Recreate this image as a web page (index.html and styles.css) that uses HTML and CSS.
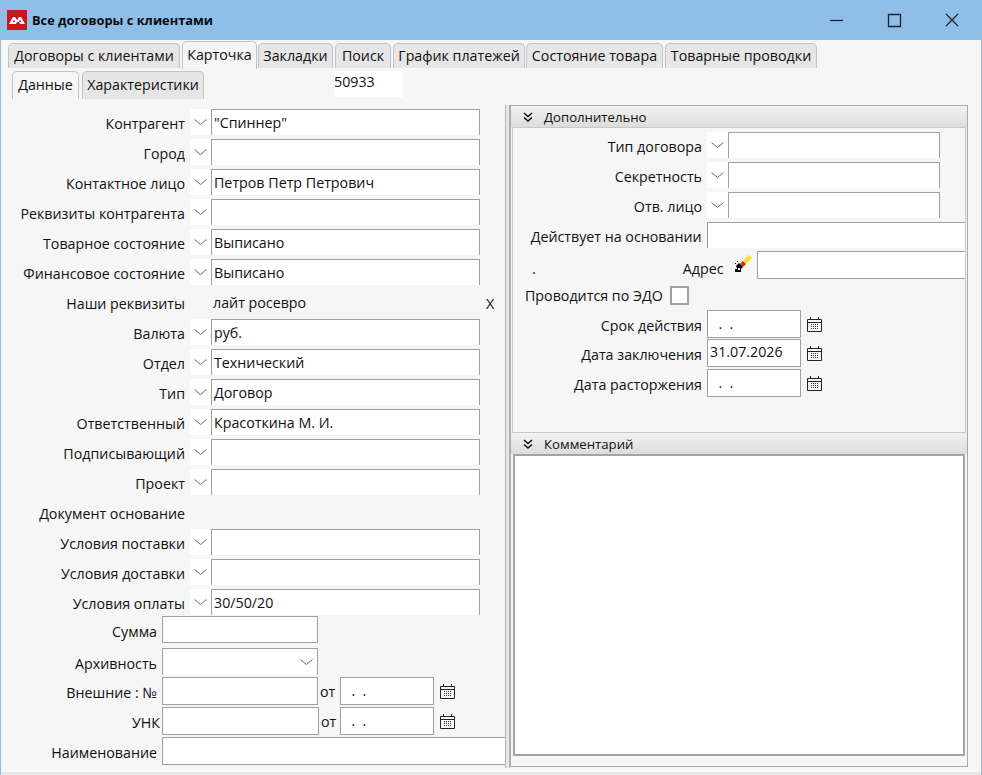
FILE: index.html
```html
<!DOCTYPE html>
<html lang="ru">
<head>
  <meta charset="UTF-8">
  <title>Все договоры с клиентами</title>
  <link rel="stylesheet" href="styles.css">
</head>
<body>
  <svg class="defs" width="0" height="0">
    <symbol id="arrow" viewBox="0 0 13 6"><path d="M.5.5 6.500 5.500 12.500.5" fill="none" stroke="#666" stroke-width="1"/></symbol>
    <symbol id="cal" viewBox="0 0 15 15">
      <path d="M.5 2.500h14v12H.5z" fill="#f8f8f8" stroke="#222"/>
      <path d="M1 5h13v1H1zM3 0h1v3H3zM11 0h1v3h-1z" fill="#222"/>
      <path d="M4 7h1v1H4zM6 7h1v1H6zM8 7h1v1H8zM10 7h1v1h-1zM4 9h1v1H4zM6 9h1v1H6zM8 9h1v1H8zM10 9h1v1h-1zM4 11h1v1H4zM6 11h1v1H6zM8 11h1v1H8zM10 11h1v1h-1z" fill="#333"/>
    </symbol>
    <symbol id="chev" viewBox="0 0 10 10"><path d="M1 1 5 4.500 9 1M1 5.500 5 9 9 5.500" fill="none" stroke="#111" stroke-width="1.500"/></symbol>
  </svg>

  <div class="titlebar">
    <svg class="logo" width="20" height="20" viewBox="0 0 20 20">
      <rect width="20" height="20" fill="#c8161d"/>
      <path fill-rule="evenodd" d="M2 14 6 7h2l2 3 2-3h2l4 7h-5l-1-2-2 0-1 2zM6 12h2L7 9.500zM12 12h2l-1-2.500z" fill="#fff"/>
    </svg>
    <span class="title">Все договоры с клиентами</span>
    <div class="winbtns">
      <svg width="58" height="40" viewBox="0 0 58 40"><path d="M23 20.500h13" stroke="#222" stroke-width="1.300"/></svg>
      <svg width="58" height="40" viewBox="0 0 58 40"><path d="M23.500 14.500h12v12h-12z" fill="none" stroke="#222" stroke-width="1.300"/></svg>
      <svg width="58" height="40" viewBox="0 0 58 40"><path d="M23 14l12 12M35 14 23 26" stroke="#222" stroke-width="1.300"/></svg>
    </div>
  </div>

  <div class="tabs">
    <div class="tab t1">Договоры с клиентами</div>
    <div class="tab active t2">Карточка</div>
    <div class="tab t3">Закладки</div>
    <div class="tab t4">Поиск</div>
    <div class="tab t5">График платежей</div>
    <div class="tab t6">Состояние товара</div>
    <div class="tab t7">Товарные проводки</div>
  </div>

  <div class="subtabs">
    <div class="tab active s1">Данные</div>
    <div class="tab s2">Характеристики</div>
    <div class="docnum">50933</div>
  </div>

  <div class="main">
    <div class="left">
      <div class="row"><label>Контрагент</label><span class="drop"><svg width="13" height="6"><use href="#arrow"/></svg></span><div class="val">"Спиннер"</div></div>
      <div class="row"><label>Город</label><span class="drop"><svg width="13" height="6"><use href="#arrow"/></svg></span><div class="val"></div></div>
      <div class="row"><label>Контактное лицо</label><span class="drop"><svg width="13" height="6"><use href="#arrow"/></svg></span><div class="val">Петров Петр Петрович</div></div>
      <div class="row"><label>Реквизиты контрагента</label><span class="drop"><svg width="13" height="6"><use href="#arrow"/></svg></span><div class="val"></div></div>
      <div class="row"><label>Товарное состояние</label><span class="drop"><svg width="13" height="6"><use href="#arrow"/></svg></span><div class="val">Выписано</div></div>
      <div class="row"><label>Финансовое состояние</label><span class="drop"><svg width="13" height="6"><use href="#arrow"/></svg></span><div class="val">Выписано</div></div>
      <div class="row"><label>Наши реквизиты</label><span class="plain">лайт росевро</span><span class="clear">X</span></div>
      <div class="row"><label>Валюта</label><span class="drop"><svg width="13" height="6"><use href="#arrow"/></svg></span><div class="val">руб.</div></div>
      <div class="row"><label>Отдел</label><span class="drop"><svg width="13" height="6"><use href="#arrow"/></svg></span><div class="val">Технический</div></div>
      <div class="row"><label>Тип</label><span class="drop"><svg width="13" height="6"><use href="#arrow"/></svg></span><div class="val">Договор</div></div>
      <div class="row"><label>Ответственный</label><span class="drop"><svg width="13" height="6"><use href="#arrow"/></svg></span><div class="val">Красоткина М. И.</div></div>
      <div class="row"><label>Подписывающий</label><span class="drop"><svg width="13" height="6"><use href="#arrow"/></svg></span><div class="val"></div></div>
      <div class="row"><label>Проект</label><span class="drop"><svg width="13" height="6"><use href="#arrow"/></svg></span><div class="val"></div></div>
      <div class="row"><label>Документ основание</label></div>
      <div class="row"><label>Условия поставки</label><span class="drop"><svg width="13" height="6"><use href="#arrow"/></svg></span><div class="val"></div></div>
      <div class="row"><label>Условия доставки</label><span class="drop"><svg width="13" height="6"><use href="#arrow"/></svg></span><div class="val"></div></div>
      <div class="row"><label>Условия оплаты</label><span class="drop"><svg width="13" height="6"><use href="#arrow"/></svg></span><div class="val">30/50/20</div></div>

      <div class="row2 r-sum"><label>Сумма</label><div class="box wide"></div></div>
      <div class="row2 r-arch"><label>Архивность</label><div class="box wide open"><svg width="13" height="6"><use href="#arrow"/></svg></div></div>
      <div class="row2 r-ext"><label>Внешние : №</label><div class="box wide"></div><span class="from">от</span><div class="box date">&nbsp;&nbsp;.&nbsp;&nbsp;.</div><svg class="calicon" width="15" height="15"><use href="#cal"/></svg></div>
      <div class="row2 r-unk"><label class="tight">УНК</label><div class="box wider"></div><span class="from">от</span><div class="box date">&nbsp;&nbsp;.&nbsp;&nbsp;.</div><svg class="calicon" width="15" height="15"><use href="#cal"/></svg></div>
      <div class="row2 r-name"><label>Наименование</label><div class="box full"></div></div>
    </div>

    <div class="splitter"></div>

    <div class="right">
      <div class="head"><svg width="10" height="10"><use href="#chev"/></svg><span>Дополнительно</span></div>
      <div class="extra">
        <div class="rrow"><label>Тип договора</label><span class="drop"><svg width="13" height="6"><use href="#arrow"/></svg></span><div class="val short"></div></div>
        <div class="rrow"><label>Секретность</label><span class="drop"><svg width="13" height="6"><use href="#arrow"/></svg></span><div class="val short"></div></div>
        <div class="rrow"><label>Отв. лицо</label><span class="drop"><svg width="13" height="6"><use href="#arrow"/></svg></span><div class="val short"></div></div>
        <div class="rrow"><label>Действует на основании</label><div class="val long"></div></div>
        <div class="addr">
          <span class="dot">.</span>
          <span class="addr-label">Адрес</span>
          <svg class="pencil" width="18" height="20" viewBox="0 0 18 20">
            <path d="M8 8 15 1l3 3-7 7z" fill="#f5e11c"/>
            <path d="M6 10l3-3 3 3-3 3z" fill="#e8202a"/>
            <path d="M2 12l3-3 4 4-2 2v3H1v-3h2v-1zM3 7h1v1H3zM1 9h1v1H1z" fill="#000"/>
            <path d="M4 14h2v2H4z" fill="#fff"/>
          </svg>
          <div class="box addr-box"></div>
        </div>
        <div class="edo"><span class="edo-text">Проводится по ЭДО</span><span class="check"></span></div>
        <div class="drow d1"><label>Срок действия</label><div class="box date">&nbsp;&nbsp;.&nbsp;&nbsp;.</div><svg class="calicon" width="15" height="15"><use href="#cal"/></svg></div>
        <div class="drow d2"><label>Дата заключения</label><div class="box date filled">31.07.2026</div><svg class="calicon" width="15" height="15"><use href="#cal"/></svg></div>
        <div class="drow d3"><label>Дата расторжения</label><div class="box date">&nbsp;&nbsp;.&nbsp;&nbsp;.</div><svg class="calicon" width="15" height="15"><use href="#cal"/></svg></div>
      </div>
      <div class="head head2"><svg width="10" height="10"><use href="#chev"/></svg><span>Комментарий</span></div>
      <div class="comment"></div>
    </div>
  </div>
  <div class="bottomline"></div>
</body>
</html>
```

FILE: styles.css
```css
* {
  box-sizing: border-box;
}

html, body {
  height: 775px;
}

body {
  margin: 0;
  width: 982px;
  overflow: hidden;
  background: #f6f6f6;
  font-family: "Open Sans", "Noto Sans", sans-serif;
  font-size: 14.25px;
  color: #111;
  border-left: 1px solid #8fbfe9;
  border-right: 1px solid #8fbfe9;
}

.defs {
  position: absolute;
}

/* Title bar */
.titlebar {
  height: 40px;
  margin: 0 -1px;
  background: #8fbfe9;
  display: flex;
  align-items: center;
  padding-left: 7px;
}

.title {
  margin-left: 5px;
  font-size: 12.800px;
  font-weight: 700;
  color: #0a0a0a;
}

.winbtns {
  margin-left: auto;
  margin-right: 1px;
  display: flex;
}

.winbtns svg {
  display: block;
}

/* Tabs */
.tabs {
  display: flex;
  height: 28px;
  margin-top: 1px;
  padding-left: 7px;
  align-items: flex-end;
}

.subtabs {
  display: flex;
  height: 34px;
  padding-left: 11px;
  margin-top: 2px;
  align-items: flex-start;
}

.tab {
  height: 25px;
  line-height: 23px;
  margin-bottom: 1px;
  text-align: center;
  white-space: nowrap;
  background: #e6e6e6;
  border: 1px solid #c4c4c4;
  border-bottom: none;
  border-radius: 5px 5px 0 0;
}

.tab.active {
  height: 28px;
  margin-bottom: 0;
  background: #f6f6f6;
  line-height: 25px;
}

.t1 { width: 172px; margin-right: 2px; }
.t2 { width: 75px; margin-right: 1px; }
.t3 { width: 75px; margin-right: 2px; }
.t4 { width: 56px; margin-right: 2px; }
.t5 { width: 132px; margin-right: 1px; }
.t6 { width: 137px; margin-right: 2px; }
.t7 { width: 152px; }

.s1 { width: 67px; margin-right: 3px; }
.s2 { width: 122px; height: 28px; line-height: 26px; margin-top: 0; }

.docnum {
  width: 69px;
  height: 26px;
  margin-left: 130px;
  line-height: 22px;
  background: #fff;
}

/* Main area */
.main {
  display: flex;
  height: 663px;
}

.left {
  width: 504px;
  padding-top: 4px;
}

.row {
  display: flex;
  height: 26px;
  margin-bottom: 4px;
  align-items: stretch;
}

label {
  line-height: 30px;
  text-align: right;
  white-space: nowrap;
}

.row label {
  width: 184px;
  margin-right: 5px;
}

.drop {
  width: 21px;
  background: #fff;
  display: flex;
  justify-content: center;
  padding-top: 10px;
}

.drop svg {
  display: block;
}

.val {
  width: 269px;
  background: #fff;
  border: 1px solid #a0a0a0;
  border-bottom: none;
  padding-left: 2px;
  line-height: 25px;
}

.plain {
  width: 273px;
  margin-left: 23px;
  line-height: 28px;
}

.clear {
  line-height: 30px;
}

.row2 {
  display: flex;
  align-items: stretch;
}

.row2 label {
  width: 156px;
  margin-right: 5px;
  line-height: 31px;
}

.row2 label.tight {
  width: 159px;
  margin-right: 2px;
}

.box {
  background: #fff;
  border: 1px solid #a0a0a0;
}

.wide { width: 156px; }
.wider { width: 157px; }
.full { width: 343px; border-right: none; }

.r-sum { height: 27px; margin-top: -3px; }
.r-arch { height: 27px; margin-top: 5px; }
.r-ext { height: 28px; margin-top: 2px; }
.r-unk { height: 28px; margin-top: 2px; }
.r-name { height: 28px; margin-top: 2px; }

.open {
  border-bottom: none;
  display: flex;
  justify-content: flex-end;
  padding: 10px 4px 0 0;
}

.open svg {
  display: block;
}

.from {
  width: 22px;
  line-height: 30px;
  padding-left: 2px;
}

.r-unk .from {
  width: 21px;
}

.date {
  width: 94px;
  line-height: 26px;
  padding-left: 3px;
}

.date.filled {
  line-height: 24px;
  padding-left: 2px;
}

.calicon {
  margin: 7px 0 0 6px;
}

.splitter {
  width: 5px;
  border-left: 1px solid #b4b4b4;
  border-right: 1px solid #b4b4b4;
  background: #e6e6e6;
}

/* Right panel */
.right {
  width: 458px;
  height: 662px;
  border: 1px solid #a8a8a8;
  display: flex;
  flex-direction: column;
  background: #f6f6f6;
}

.head {
  height: 21px;
  flex: none;
  display: flex;
  align-items: center;
  padding-left: 12px;
  background: linear-gradient(#f2f2f2, #dcdcdc);
  font-size: 13.200px;
}

.head span {
  margin-left: 11px;
}

.extra {
  height: 306px;
  flex: none;
  margin: 0 1px;
  border: 1px solid #c8c8c8;
  padding-top: 4px;
}

.rrow {
  display: flex;
  height: 26px;
  margin-bottom: 4px;
}

.rrow label {
  width: 189px;
  margin-right: 5px;
}

.rrow .short {
  width: 212px;
}

.rrow .long {
  width: 259px;
  border-right: none;
}

.addr {
  display: flex;
  height: 28px;
  margin-top: -1px;
}

.dot {
  width: 20px;
  padding-left: 19px;
  line-height: 36px;
}

.addr-label {
  width: 191px;
  text-align: right;
  line-height: 36px;
}

.pencil {
  margin: 3px 0 0 10px;
}

.addr-box {
  width: 209px;
  margin-left: 5px;
  border-right: none;
}

.edo {
  display: flex;
  height: 20px;
  margin-top: 7px;
  padding-left: 12px;
  line-height: 20px;
}

.edo-text {
  width: 139px;
  white-space: nowrap;
}

.check {
  width: 19px;
  height: 19px;
  margin-left: 6px;
  background: #fff;
  border: 2px solid #a0a0a0;
}

.drow {
  display: flex;
  height: 28px;
}

.drow label {
  width: 189px;
  margin-right: 5px;
  line-height: 31px;
}

.d1 { margin-top: 4px; }
.d2 { margin-top: 1px; }
.d3 { margin-top: 2px; }

.comment {
  height: 302px;
  flex: none;
  margin: 0 2px;
  background: #fff;
  border: 2px solid #a4a4a4;
}

.bottomline {
  height: 3px;
  background: #e8e8e8;
  margin-top: 4px;
}
```
